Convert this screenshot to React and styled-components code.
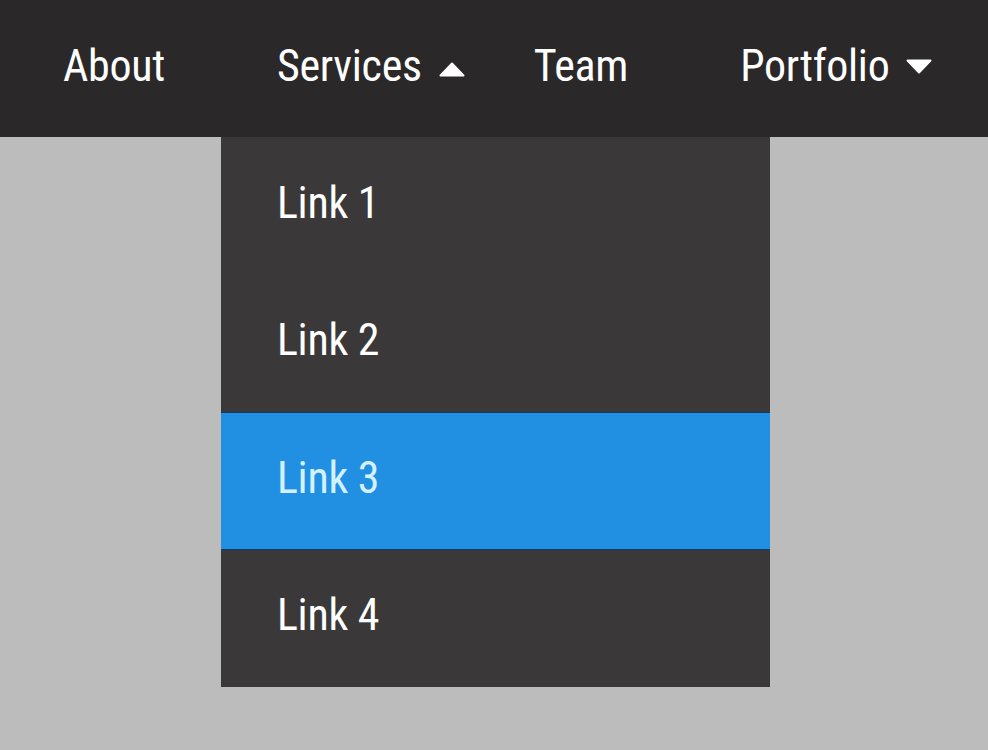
import React from "react";
import styled, { createGlobalStyle } from "styled-components";

const GlobalStyle = createGlobalStyle`
  html, body {
    margin: 0;
    padding: 0;
    background: #bdbcbc;
  }
  body {
    font-family: "Roboto Condensed", Roboto, "Liberation Sans", sans-serif;
  }
`;

const services = ["Link 1", "Link 2", "Link 3", "Link 4"];

const Caret = ({ up }) => (
  <CaretIcon viewBox="0 0 26 15" up={up ? 1 : 0}>
    <path d="M13 1.5 L24.5 13.5 L1.5 13.5 Z" fill="#fff" stroke="#fff" strokeWidth="2" strokeLinejoin="round" />
  </CaretIcon>
);

const App = () => {
  return (
    <Page>
      <GlobalStyle />
      <NavBar>
        <NavList>
          <NavItem>
            <NavLink>About</NavLink>
          </NavItem>
          <NavItem>
            <NavLink>
              Services
              <Caret up />
            </NavLink>
            <Dropdown>
              {services.map((link, index) => (
                <DropItem key={index} active={link === "Link 3" ? 1 : 0}>
                  {link}
                </DropItem>
              ))}
            </Dropdown>
          </NavItem>
          <NavItem>
            <NavLink>Team</NavLink>
          </NavItem>
          <NavItem>
            <NavLink>
              Portfolio
              <Caret />
            </NavLink>
          </NavItem>
        </NavList>
      </NavBar>
    </Page>
  );
};

const Page = styled.div`
  min-height: 750px;
  background: #bdbcbc;
`;

const NavBar = styled.nav`
  background: #2a2828;
  height: 137px;
  padding-left: 7px;
`;

const NavList = styled.ul`
  display: flex;
  margin: 0;
  padding: 0;
  list-style: none;
  height: 100%;
`;

const NavItem = styled.li`
  position: relative;
  height: 100%;
`;

const NavLink = styled.a`
  display: flex;
  align-items: center;
  box-sizing: border-box;
  height: 100%;
  padding: 0 56px 6px;
  color: #fff;
  font-size: 44px;
  letter-spacing: -0.3px;
  text-decoration: none;
  cursor: pointer;
`;

const CaretIcon = styled.svg`
  width: 26px;
  height: 15px;
  margin-left: 17px;
  margin-right: -43px;
  margin-top: ${({ up }) => (up ? "8px" : "2px")};
  transform: ${({ up }) => (up ? "none" : "rotate(180deg)")};
`;

const Dropdown = styled.ul`
  position: absolute;
  top: 100%;
  left: 0;
  width: 549px;
  margin: 0;
  padding: 0;
  list-style: none;
  background: #3a3838;
  z-index: 2;
`;

const DropItem = styled.li`
  display: flex;
  align-items: center;
  height: 137.5px;
  padding: 0 56px 6px;
  font-size: 44px;
  letter-spacing: -0.3px;
  color: ${({ active }) => (active ? "#d4f1ff" : "#fff")};
  background: ${({ active }) => (active ? "#2190e3" : "transparent")};
  border-top: ${({ active }) => (active ? "1px solid #0d3f66" : "none")};
  border-bottom: ${({ active }) => (active ? "1px solid #0d3f66" : "none")};
  box-sizing: border-box;
  cursor: pointer;
`;

export default App;
